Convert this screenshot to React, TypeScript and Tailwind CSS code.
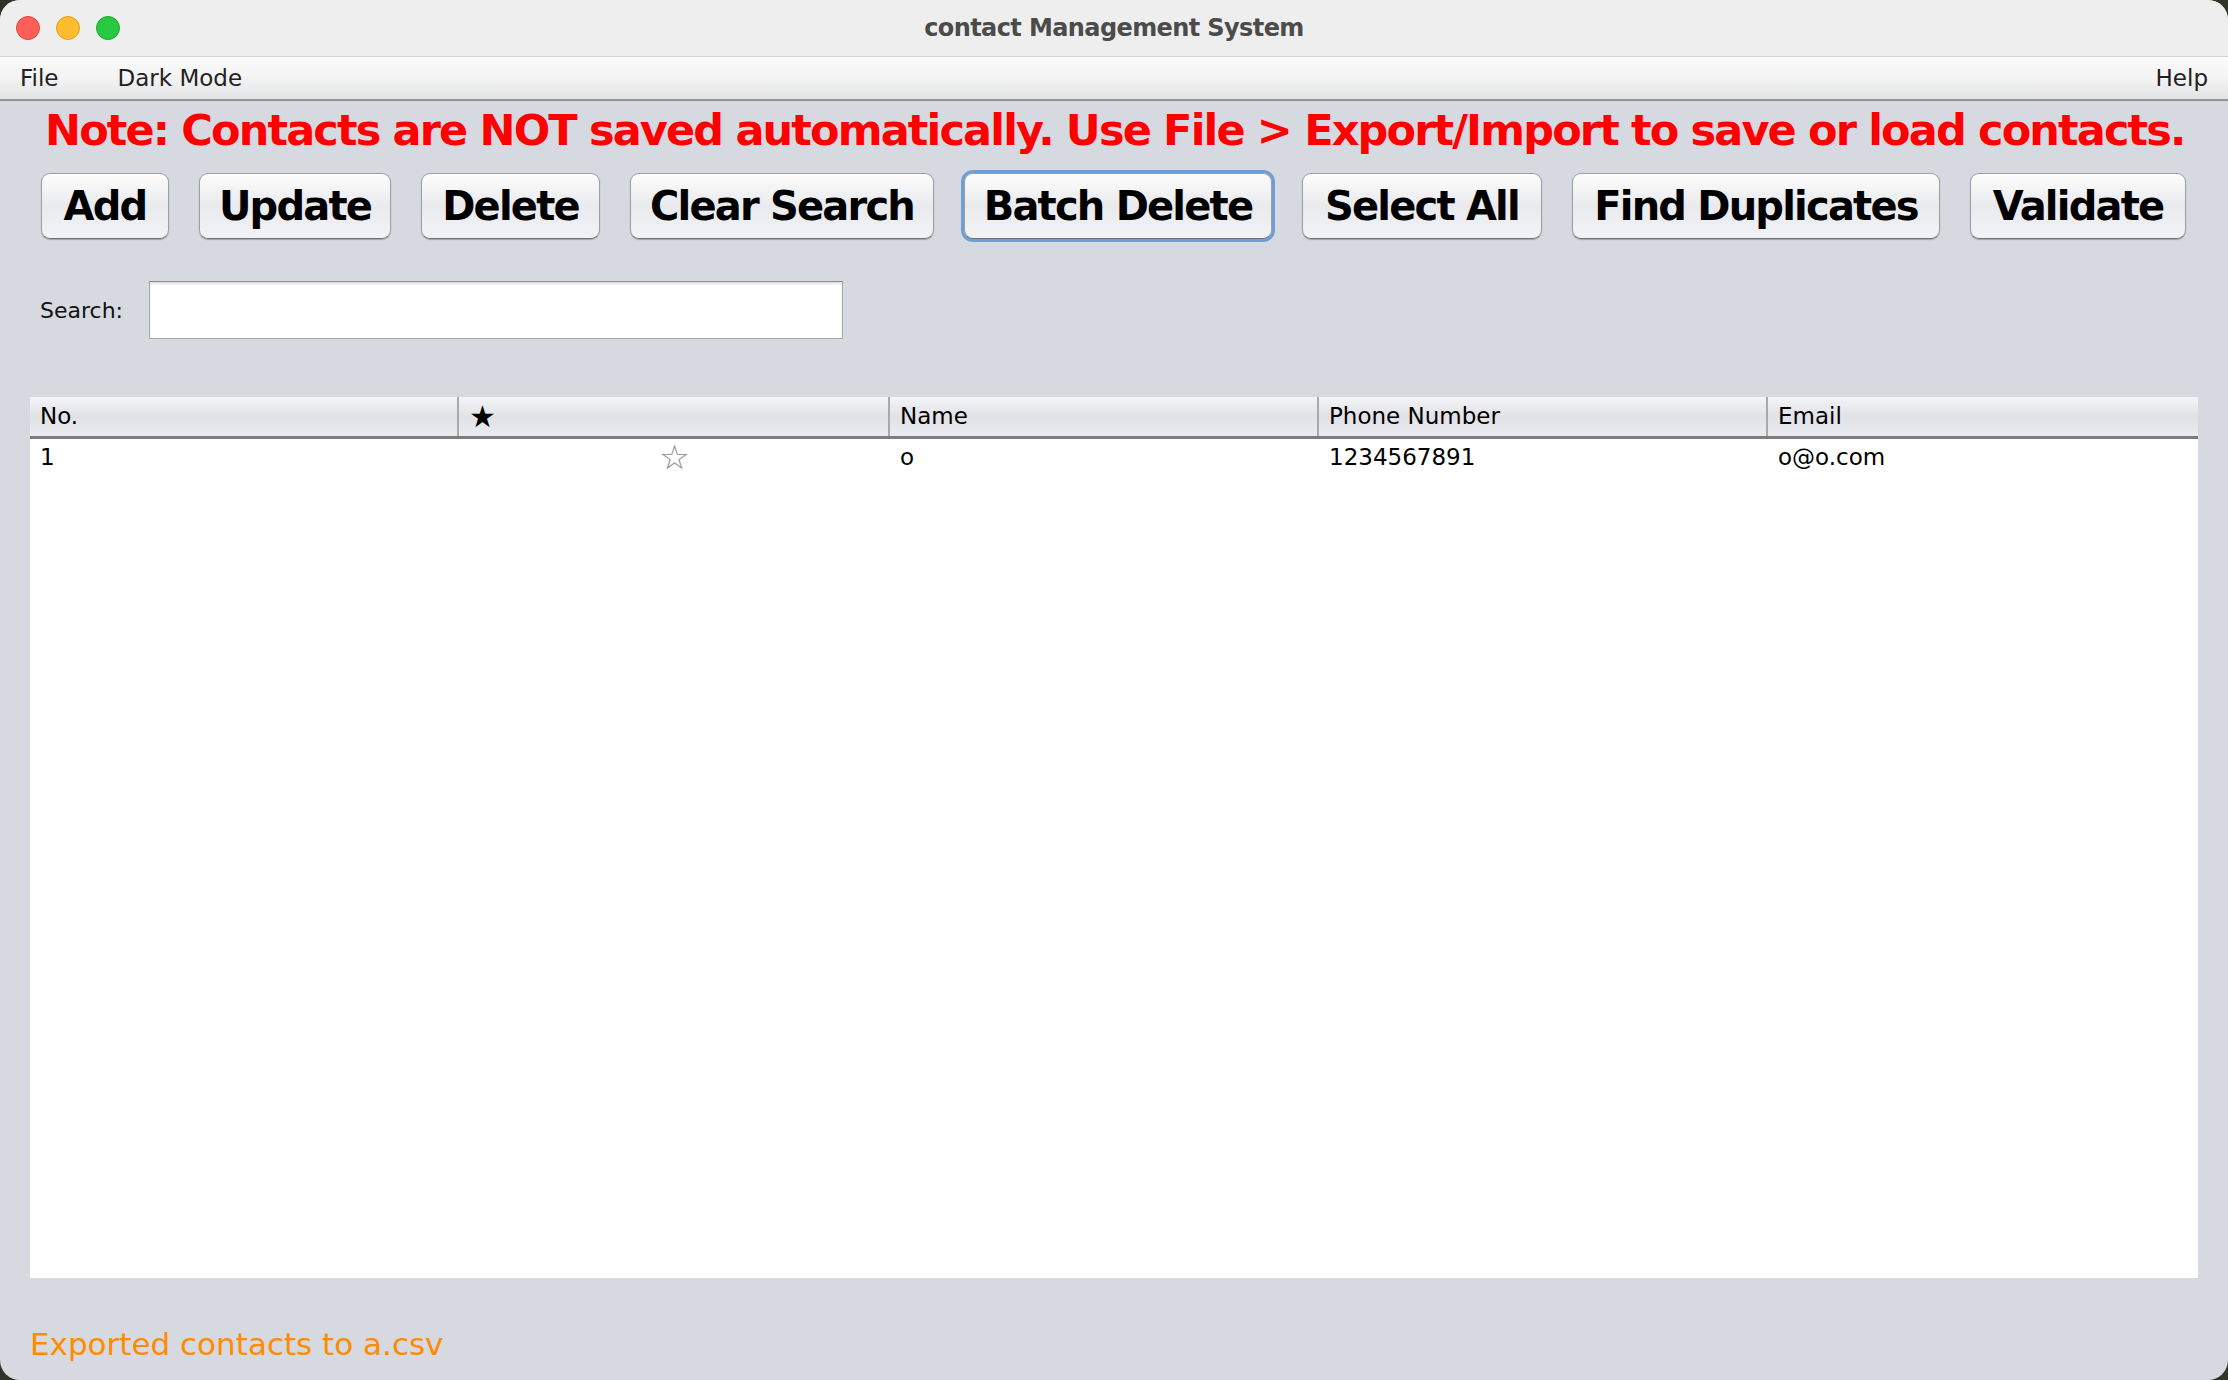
import React from 'react';

const buttons = [
  { label: 'Add', w: 'w-[128px]' },
  { label: 'Update', w: 'w-[192px]' },
  { label: 'Delete', w: 'w-[179px]' },
  { label: 'Clear Search', w: 'w-[304px]' },
  { label: 'Batch Delete', w: 'w-[308px]', focused: true },
  { label: 'Select All', w: 'w-[240px]' },
  { label: 'Find Duplicates', w: 'w-[368px]' },
  { label: 'Validate', w: 'w-[216px]' },
];

const columns = [
  { label: 'No.', w: 'w-[429px]' },
  { label: '★', w: 'w-[431px]', star: true },
  { label: 'Name', w: 'w-[429px]' },
  { label: 'Phone Number', w: 'w-[449px]' },
  { label: 'Email', w: 'flex-1' },
];

export default function App() {
  return (
    <div className="w-[2228px] h-[1380px] bg-[#2f3328] font-['DejaVu_Sans',sans-serif]">
      <div className="w-full h-full rounded-[20px] overflow-hidden bg-[#d6d9e0] flex flex-col">
        {/* Title bar */}
        <div className="h-[57px] shrink-0 bg-[#eeeeee] border-b border-[#d2d2d2] relative flex items-center justify-center">
          <div className="absolute left-[16px] top-[16px] flex gap-[16px]">
            <div className="w-[24px] h-[24px] rounded-full bg-[#fe5f57] border border-[#e2463f]" />
            <div className="w-[24px] h-[24px] rounded-full bg-[#febc2e] border border-[#e1a116]" />
            <div className="w-[24px] h-[24px] rounded-full bg-[#28c840] border border-[#1aab29]" />
          </div>
          <span className="text-[24px] font-bold text-[#4b4b4b] tracking-[-0.6px]">contact Management System</span>
        </div>

        {/* Menu bar */}
        <div className="h-[44px] shrink-0 bg-gradient-to-b from-[#fbfbfb] via-[#f3f3f3] to-[#e2e3e5] border-b-2 border-[#8f939a] flex items-center px-[20px] text-[23px] text-[#222]">
          <span>File</span>
          <span className="ml-[59px]">Dark Mode</span>
          <span className="ml-auto">Help</span>
        </div>

        {/* Note */}
        <div className="pl-[45px] h-[72px] shrink-0 text-[43px] font-bold text-[#ff0000] whitespace-nowrap leading-[58px] tracking-[-1.85px]">
          Note: Contacts are NOT saved automatically. Use File &gt; Export/Import to save or load contacts.
        </div>

        {/* Buttons */}
        <div className="flex gap-[30px] pl-[41px] shrink-0">
          {buttons.map((b) => (
            <div
              key={b.label}
              className={`${b.w} h-[66px] rounded-[9px] ${b.focused ? 'ring-[3px] ring-[#6e9fd4]' : ''} border border-[#9c9ea3] border-b-[#6f7176] bg-gradient-to-b from-[#fdfdfd] via-[#e9eaed] to-[#f2f3f6] shadow-[0_1px_1px_rgba(0,0,0,0.25)] flex items-center justify-center text-[40px] font-bold text-black whitespace-nowrap tracking-[-1.8px]`}
            >
              {b.label}
            </div>
          ))}
        </div>

        {/* Search */}
        <div className="flex items-center mt-[42px] pl-[40px] shrink-0">
          <span className="text-[22px] text-[#111] w-[109px]">Search:</span>
          <div className="w-[694px] h-[58px] bg-white border border-[#a9a9a9] border-t-[#8c8c8c] shadow-[inset_0_2px_2px_rgba(0,0,0,0.12)]" />
        </div>

        {/* Table */}
        <div className="mx-[30px] mt-[58px] h-[881px] bg-white flex flex-col shrink-0">
          <div className="h-[42px] flex bg-gradient-to-b from-[#f3f4f6] via-[#e1e2e6] to-[#e9ebf0] border-b-[3px] border-[#7c7c7c] text-[23px] text-black">
            {columns.map((c, i) => (
              <div
                key={c.label}
                className={`${c.w} flex items-center pl-[10px] ${c.star ? 'text-[30px]' : ''} ${i < columns.length - 1 ? 'border-r-2 border-[#a8a8a8]' : ''}`}
              >
                {c.label}
              </div>
            ))}
          </div>
          <div className="h-[36px] flex text-[23px] text-black">
            <div className="w-[429px] pl-[10px] flex items-center">1</div>
            <div className="w-[431px] flex items-center justify-center text-[34px] text-[#8a8a8a]">☆</div>
            <div className="w-[429px] pl-[10px] flex items-center">o</div>
            <div className="w-[449px] pl-[10px] flex items-center">1234567891</div>
            <div className="flex-1 pl-[10px] flex items-center">o@o.com</div>
          </div>
        </div>

        {/* Status */}
        <div className="pl-[30px] mt-[43px] text-[31px] text-[#ff8c00]">Exported contacts to a.csv</div>
      </div>
    </div>
  );
}
